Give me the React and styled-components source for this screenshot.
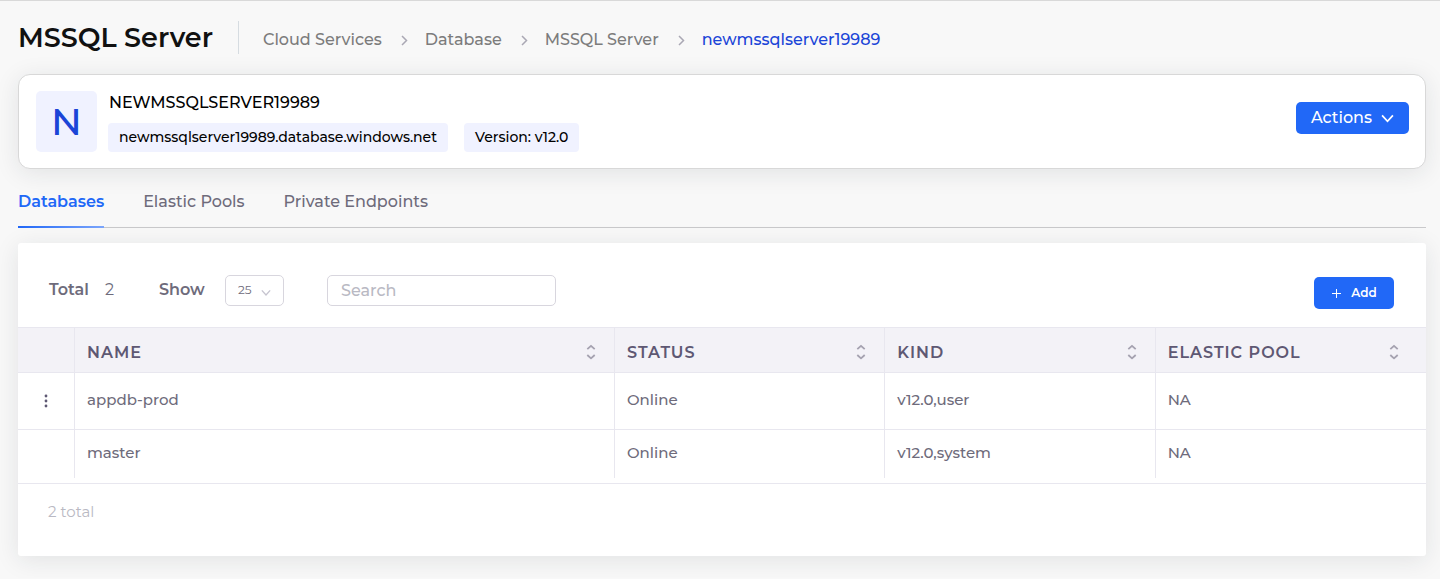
import React from "react";
import styled, { createGlobalStyle, css } from "styled-components";

const GlobalStyle = createGlobalStyle`
  *, *::before, *::after { box-sizing: border-box; }
  body {
    margin: 0;
    background: #f8f8f8;
    color: #6e6b7b;
    font-family: Montserrat, Inter, "Open Sans", sans-serif;
    font-size: 16px;
    line-height: 24px;
  }
  button, input, select { font: inherit; color: inherit; }
`;

const Page = styled.main`
  border-top: 1px solid #d9d9d9;
  padding: 20px 14px 22px 18px;
`;

const PageHeader = styled.header`
  display: flex;
  align-items: center;
  height: 33px;
  margin-bottom: 20px;
`;

const Title = styled.h1`
  margin: 0;
  width: 221px;
  border-right: 1px solid #d6dce1;
  font-size: 27px;
  font-weight: 600;
  line-height: 33px;
  color: #111;
  white-space: nowrap;
`;

const Crumbs = styled.ol`
  display: flex;
  margin: 0;
  padding: 4px 0 0 24px;
  list-style: none;
`;

const Crumb = styled.li`
  display: flex;
  align-items: center;
  font-weight: 500;
  a { color: #7c7c7c; text-decoration: none; }
  a[aria-current] { color: #1b45d7; }
  svg { margin: 0 15px 0 14px; }
`;

const Summary = styled.section`
  display: flex;
  align-items: center;
  height: 95px;
  padding: 0 16px 0 17px;
  background: #fff;
  border: 1px solid #d8d8d8;
  border-radius: 12px;
  box-shadow: 0 4px 24px rgba(34, 41, 47, 0.1);
`;

const Avatar = styled.div`
  width: 61px;
  height: 61px;
  margin-right: 11px;
  border-radius: 5px;
  background: #f0f2ff;
  color: #1b45d7;
  font-size: 38px;
  font-weight: 500;
  line-height: 61px;
  text-align: center;
`;

const Identity = styled.div`
  flex: 1;
  height: 61px;
`;

const ServerName = styled.h2`
  margin: 0 0 8px;
  padding-left: 1px;
  font-size: 16px;
  font-weight: 500;
  line-height: 24px;
  color: #000;
`;

const Chips = styled.div`
  display: flex;
  gap: 16px;
`;

const Chip = styled.span`
  padding: 0 11px;
  border-radius: 4px;
  background: #f0f2ff;
  color: #000;
  font-size: 14px;
  font-weight: 500;
  line-height: 29px;
`;

const Button = styled.button`
  display: flex;
  align-items: center;
  justify-content: center;
  gap: 9px;
  width: ${(p) => (p.$small ? 80 : 113)}px;
  height: 32px;
  padding: 0;
  border: 0;
  border-radius: 5px;
  background: #2168f7;
  color: #fff;
  font-size: ${(p) => (p.$small ? 12 : 16)}px;
  font-weight: ${(p) => (p.$small ? 600 : 500)};
`;

const SummaryActions = styled.div`
  padding-bottom: 8px;
`;

const Tabs = styled.div`
  display: flex;
  gap: 39px;
  height: 43px;
  margin: 16px 0 15px;
  border-bottom: 1px solid #c9c9cb;
`;

const Tab = styled.button`
  position: relative;
  height: 43px;
  padding: 0 0 9px;
  border: 0;
  background: none;
  color: #6e6b7b;
  font-size: 16px;
  font-weight: 500;
  ${(p) =>
    p["aria-selected"] &&
    css`
      color: #2168f7;
      font-weight: 600;
      &::after {
        content: "";
        position: absolute;
        left: 0;
        right: 0;
        bottom: 0;
        height: 2px;
        background: linear-gradient(90deg, #2168f7, #7ba5fb);
      }
    `}
`;

const Panel = styled.section`
  background: #fff;
  border-radius: 3px;
  box-shadow: 0 4px 24px rgba(34, 41, 47, 0.1);
`;

const Toolbar = styled.div`
  display: flex;
  align-items: center;
  height: 84px;
  padding: 10px 32px 0 31px;
`;

const Total = styled.div`
  width: 110px;
  b { margin-right: 12px; font-weight: 600; }
`;

const ShowLabel = styled.label`
  width: 66px;
  font-weight: 600;
`;

const SelectBox = styled.div`
  display: grid;
  width: 59px;
  height: 31px;
  margin-right: 43px;
  align-items: center;
  select {
    grid-area: 1 / 1;
    width: 59px;
    height: 31px;
    padding: 0 12px;
    appearance: none;
    border: 1px solid #d8d6de;
    border-radius: 5px;
    background: #fff;
    font-size: 12px;
  }
  svg {
    grid-area: 1 / 1;
    justify-self: end;
    margin: 4px 13px 0 0;
    pointer-events: none;
  }
`;

const SearchInput = styled.input`
  width: 229px;
  height: 31px;
  margin-right: auto;
  padding: 0 13px;
  border: 1px solid #d8d6de;
  border-radius: 5px;
  background: #fff;
  font-weight: 500;
  &::placeholder { color: #b9b9c3; opacity: 1; }
`;

const AddSlot = styled.div`
  padding-top: 6px;
`;

const Table = styled.table`
  width: 100%;
  table-layout: fixed;
  border-collapse: separate;
  border-spacing: 0;
  text-align: left;
`;

const HeadCell = styled.th`
  width: ${(p) => p.$width};
  height: 46px;
  padding: 6px ${(p) => (p.$last ? 27 : 18)}px 0 12px;
  border: solid #e8e7ef;
  border-width: 1px ${(p) => (p.$last ? 0 : 1)}px 1px 0;
  background: #f3f2f7;
  color: #5e5873;
  font-weight: 600;
  letter-spacing: 1px;
`;

const HeadContent = styled.div`
  display: flex;
  align-items: center;
  justify-content: space-between;
  svg { margin-bottom: 2px; }
`;

const Cell = styled.td`
  height: ${(p) => (p.$first ? 57 : 48)}px;
  padding: 0 12px ${(p) => (p.$first ? 3 : 2)}px;
  border: solid #e8e7ef;
  border-width: 0 1px ${(p) => (p.$first ? 1 : 0)}px 0;
  font-size: 15px;
  font-weight: 500;
  &:last-child { border-right: 0; }
`;

const RowMenu = styled.button`
  display: block;
  margin: 2px auto 0;
  padding: 0;
  border: 0;
  background: none;
  svg { display: block; }
`;

const PanelFooter = styled.footer`
  height: 73px;
  margin-top: 5px;
  padding: 16px 30px;
  border-top: 1px solid #e8e7ef;
  color: #b9b9c3;
  font-size: 15px;
`;

const Chevron = ({ color, width }) => (
  <svg width={width} height={width} viewBox="0 0 12 12" fill="none" stroke={color} aria-hidden="true">
    <path d="M1 4L6 9.5L11 4" strokeWidth="1.6" />
  </svg>
);

const CrumbArrow = () => (
  <svg width="14" height="14" viewBox="0 0 14 14" fill="none" stroke="#aaa8b4" strokeWidth="1.5" aria-hidden="true">
    <path d="M6 3L10.5 7.5L6 12" />
  </svg>
);

const SortIcon = () => (
  <svg width="10" height="16" viewBox="0 0 10 16" fill="none" stroke="#a5a2b0" strokeWidth="1.8" aria-hidden="true">
    <path d="M1.3 5.2L5 1.8L8.7 5.2M1.3 11L5 14.4L8.7 11" strokeLinejoin="round" />
  </svg>
);

const columns = [
  { label: "NAME", width: "auto" },
  { label: "STATUS", width: "19.2%" },
  { label: "KIND", width: "19.2%" },
  { label: "ELASTIC POOL", width: "19.2%" },
];

const rows = [
  { name: "appdb-prod", status: "Online", kind: "v12.0,user", pool: "NA", menu: true },
  { name: "master", status: "Online", kind: "v12.0,system", pool: "NA" },
];

const crumbs = ["Cloud Services", "Database", "MSSQL Server", "newmssqlserver19989"];
const tabs = ["Databases", "Elastic Pools", "Private Endpoints"];

export default function App() {
  return (
    <>
      <GlobalStyle />
      <Page>
        <PageHeader>
          <Title>MSSQL Server</Title>
          <nav aria-label="Breadcrumb">
            <Crumbs>
              {crumbs.map((c, i) => (
                <Crumb key={c}>
                  {i > 0 && <CrumbArrow />}
                  <a href="#" aria-current={i === crumbs.length - 1 ? "page" : undefined}>{c}</a>
                </Crumb>
              ))}
            </Crumbs>
          </nav>
        </PageHeader>

        <Summary>
          <Avatar>N</Avatar>
          <Identity>
            <ServerName>NEWMSSQLSERVER19989</ServerName>
            <Chips>
              <Chip>newmssqlserver19989.database.windows.net</Chip>
              <Chip>Version: v12.0</Chip>
            </Chips>
          </Identity>
          <SummaryActions>
            <Button type="button">
              Actions
              <Chevron color="#fff" width={13} />
            </Button>
          </SummaryActions>
        </Summary>

        <Tabs role="tablist">
          {tabs.map((t, i) => (
            <Tab key={t} type="button" role="tab" aria-selected={i === 0}>{t}</Tab>
          ))}
        </Tabs>

        <Panel>
          <Toolbar>
            <Total><b>Total</b> 2</Total>
            <ShowLabel htmlFor="page-size">Show</ShowLabel>
            <SelectBox>
              <select id="page-size" defaultValue="25">
                <option>10</option>
                <option>25</option>
                <option>50</option>
              </select>
              <Chevron color="#c6c4cf" width={10} />
            </SelectBox>
            <SearchInput type="search" placeholder="Search" aria-label="Search" />
            <AddSlot>
              <Button type="button" $small>
                <svg width="11" height="11" viewBox="0 0 11 11" stroke="#fff" aria-hidden="true">
                  <path d="M5.5 1V10M1 5.5H10" />
                </svg>
                Add
              </Button>
            </AddSlot>
          </Toolbar>

          <Table>
            <thead>
              <tr>
                <HeadCell $width="57px" aria-label="Row actions" />
                {columns.map((c, i) => (
                  <HeadCell key={c.label} scope="col" $width={c.width} $last={i === columns.length - 1}>
                    <HeadContent>
                      {c.label}
                      <SortIcon />
                    </HeadContent>
                  </HeadCell>
                ))}
              </tr>
            </thead>
            <tbody>
              {rows.map((r, i) => (
                <tr key={r.name}>
                  <Cell $first={i === 0}>
                    {r.menu && (
                      <RowMenu type="button" aria-label="Row menu">
                        <svg width="4" height="14" viewBox="0 0 4 14" fill="#5e5873">
                          <circle cx="2" cy="2" r="1.4" />
                          <circle cx="2" cy="7" r="1.4" />
                          <circle cx="2" cy="12" r="1.4" />
                        </svg>
                      </RowMenu>
                    )}
                  </Cell>
                  <Cell $first={i === 0}>{r.name}</Cell>
                  <Cell $first={i === 0}>{r.status}</Cell>
                  <Cell $first={i === 0}>{r.kind}</Cell>
                  <Cell $first={i === 0}>{r.pool}</Cell>
                </tr>
              ))}
            </tbody>
          </Table>
          <PanelFooter>2 total</PanelFooter>
        </Panel>
      </Page>
    </>
  );
}
